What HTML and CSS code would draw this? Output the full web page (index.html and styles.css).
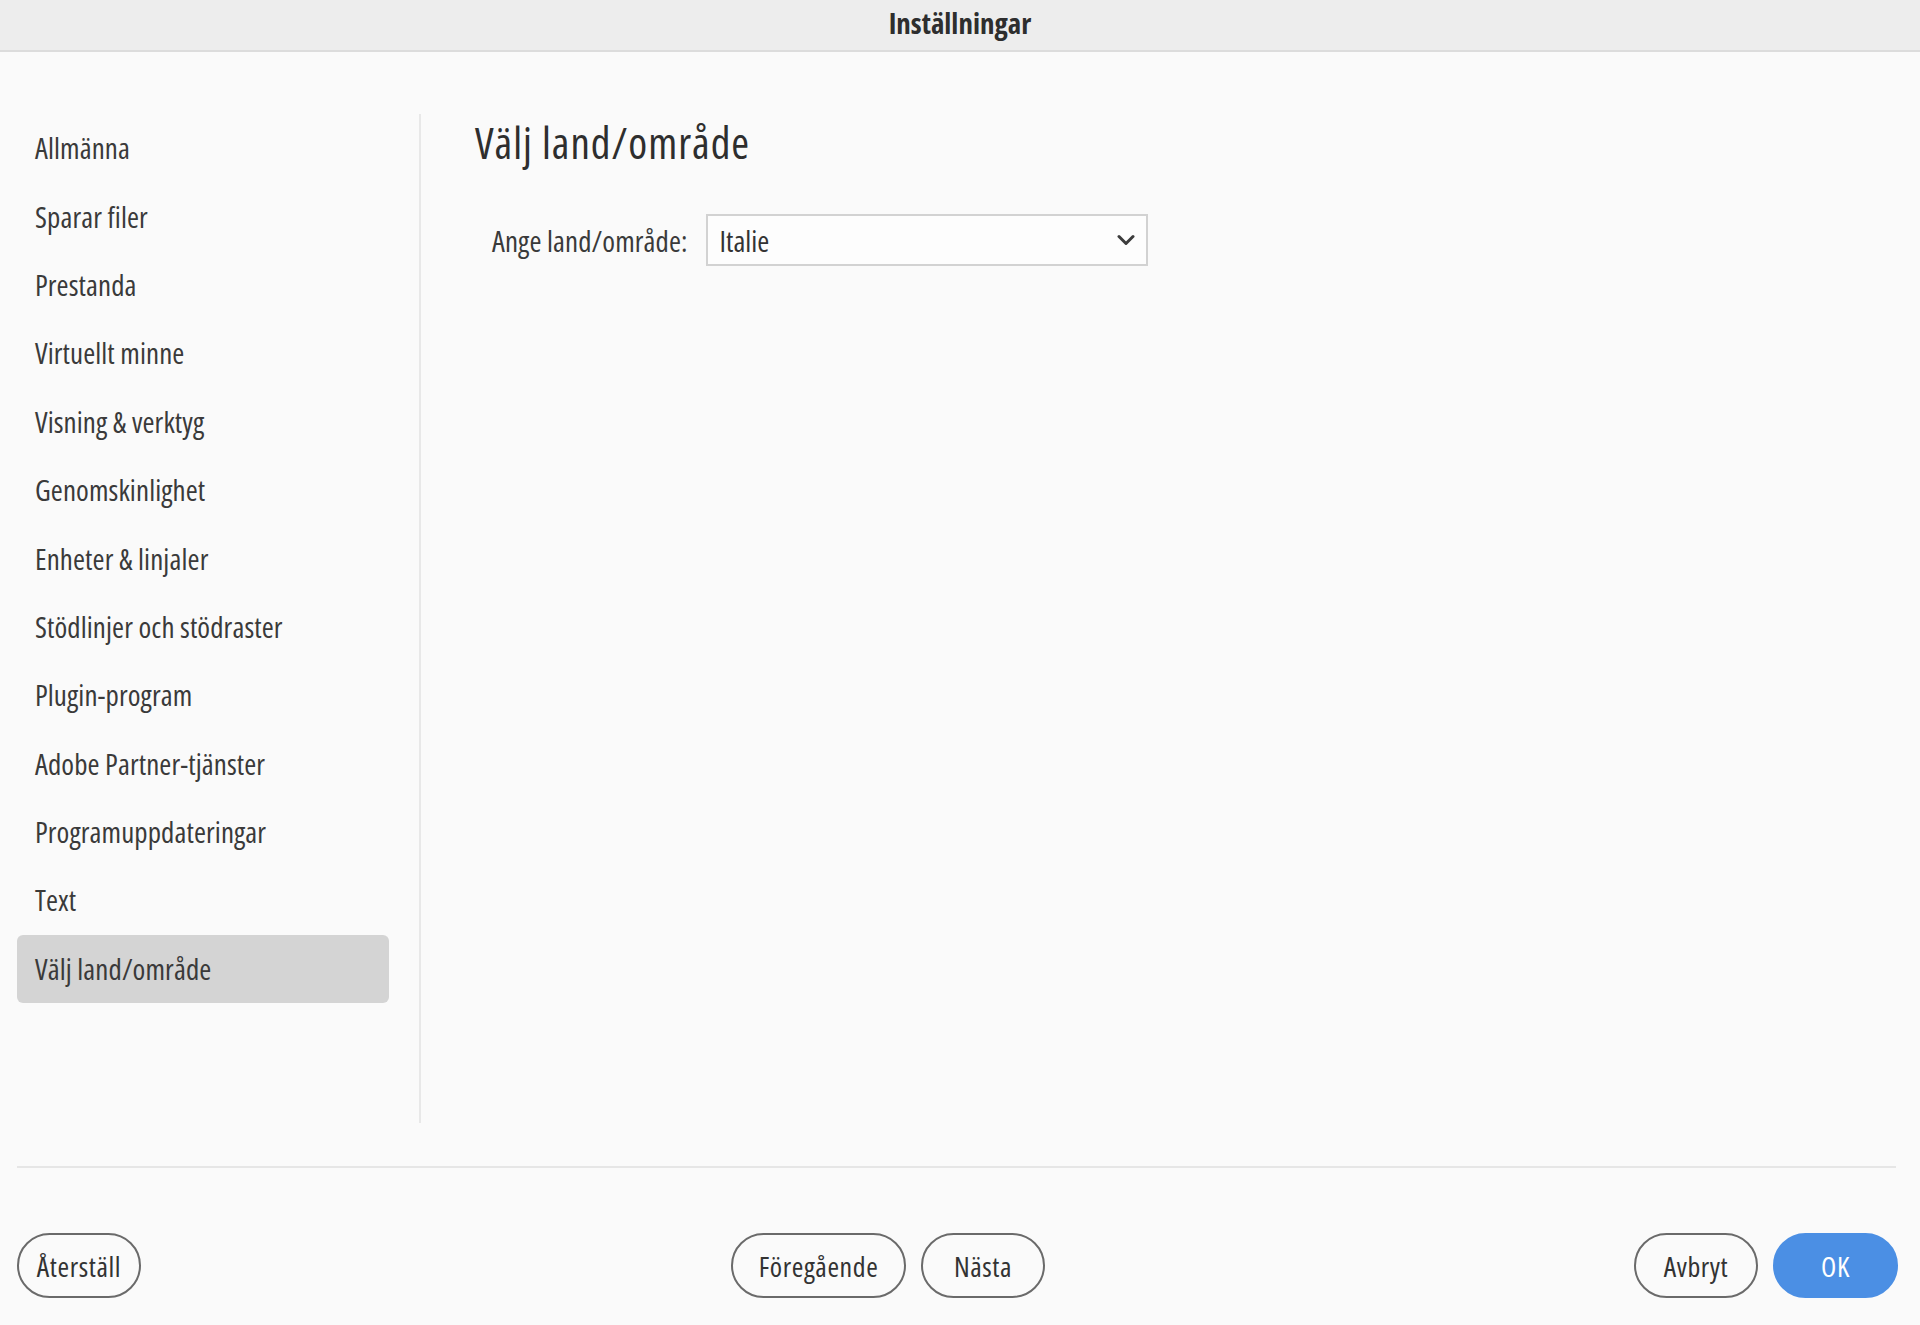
FILE: index.html
```html
<!DOCTYPE html>
<html>
  <head>
    <meta charset="UTF-8">
    <title>Inställningar</title>
    <link rel="stylesheet" href="styles.css">
  </head>
  <body>
    <div class="title-bar">Inställningar</div>

    <div class="panes">
      <div class="sidebar">
        <div class="nav-item">Allmänna</div>
        <div class="nav-item">Sparar filer</div>
        <div class="nav-item">Prestanda</div>
        <div class="nav-item">Virtuellt minne</div>
        <div class="nav-item">Visning &amp; verktyg</div>
        <div class="nav-item">Genomskinlighet</div>
        <div class="nav-item">Enheter &amp; linjaler</div>
        <div class="nav-item">Stödlinjer och stödraster</div>
        <div class="nav-item">Plugin-program</div>
        <div class="nav-item">Adobe Partner-tjänster</div>
        <div class="nav-item">Programuppdateringar</div>
        <div class="nav-item">Text</div>
        <div class="nav-item selected">Välj land/område</div>
      </div>

      <div class="main">
        <h1 class="heading">Välj land/område</h1>
        <div class="field-row">
          <label class="field-label">Ange land/område:</label>
          <div class="select">
            <span>Italie</span>
            <svg class="chevron" width="18" height="12" viewBox="0 0 18 12">
              <path d="M2 2.5 L9 9.5 L16 2.5" fill="none" stroke="#3c3c3c" stroke-width="3" stroke-linecap="round" stroke-linejoin="round"/>
            </svg>
          </div>
        </div>
      </div>
    </div>

    <div class="rule"></div>

    <div class="footer">
      <button class="btn">Återställ</button>
      <div class="btn-group middle">
        <button class="btn wide">Föregående</button>
        <button class="btn">Nästa</button>
      </div>
      <div class="btn-group right">
        <button class="btn">Avbryt</button>
        <button class="btn primary">OK</button>
      </div>
    </div>
  </body>
</html>
```

FILE: styles.css
```css
body {
  margin: 0;
  padding: 0;
  background-color: #fafafa;
  font-family: "Open Sans", "Liberation Sans", sans-serif;
  font-stretch: 75%;
  color: #333333;
}

.title-bar {
  height: 45px;
  padding-bottom: 5px;
  background-color: #ededed;
  border-bottom: 2px solid #dcdcdc;
  display: flex;
  align-items: center;
  justify-content: center;
  font-weight: bold;
  font-size: 29px;
  color: #2e2e2e;
}

.panes {
  display: flex;
  height: 1114px;
  padding-top: 62px;
  box-sizing: border-box;
}

.sidebar {
  width: 421px;
  height: 1009px;
  box-sizing: border-box;
  padding-left: 17px;
  border-right: 2px solid #e8e8e8;
}

.nav-item {
  width: 372px;
  height: 68.4px;
  box-sizing: border-box;
  padding-left: 18px;
  padding-bottom: 1px;
  display: flex;
  align-items: center;
  font-size: 29px;
  letter-spacing: 0.1px;
  color: #3a3a3a;
  border-radius: 6px;
}

.nav-item.selected {
  background-color: #d4d4d4;
}

.main {
  padding-left: 54px;
}

.heading {
  margin: 0;
  height: 58px;
  line-height: 58px;
  font-size: 43px;
  letter-spacing: 1px;
  font-weight: normal;
  color: #2e2e2e;
}

.field-row {
  margin-top: 42px;
  display: flex;
  align-items: center;
  padding-left: 17px;
}

.field-label {
  font-size: 29px;
  letter-spacing: 0.1px;
  color: #3a3a3a;
  margin-right: 18px;
}

.select {
  width: 442px;
  height: 52px;
  box-sizing: border-box;
  border: 2px solid #d2d2d2;
  background-color: #fdfdfd;
  display: flex;
  align-items: center;
  justify-content: space-between;
  padding: 0 11px 0 12px;
  font-size: 29px;
  color: #333333;
}

.rule {
  height: 2px;
  background-color: #e6e6e6;
  margin: 0 24px 0 17px;
}

.footer {
  display: flex;
  align-items: center;
  padding: 65px 22px 0 17px;
}

.btn-group {
  display: flex;
  gap: 15px;
}

.btn-group.middle {
  margin-left: 590px;
}

.btn-group.right {
  margin-left: auto;
}

.btn {
  width: 124px;
  height: 65px;
  border: 2px solid #6a6a6a;
  border-radius: 33px;
  background-color: #fafafa;
  font-family: "Open Sans", "Liberation Sans", sans-serif;
  font-stretch: 75%;
  font-size: 28px;
  letter-spacing: 0.6px;
  color: #333333;
  padding: 0;
  cursor: pointer;
}

.btn.wide {
  width: 175px;
}

.btn.primary {
  width: 125px;
  border-color: #4b8fe4;
  background-color: #4b8fe4;
  color: #ffffff;
}
```
